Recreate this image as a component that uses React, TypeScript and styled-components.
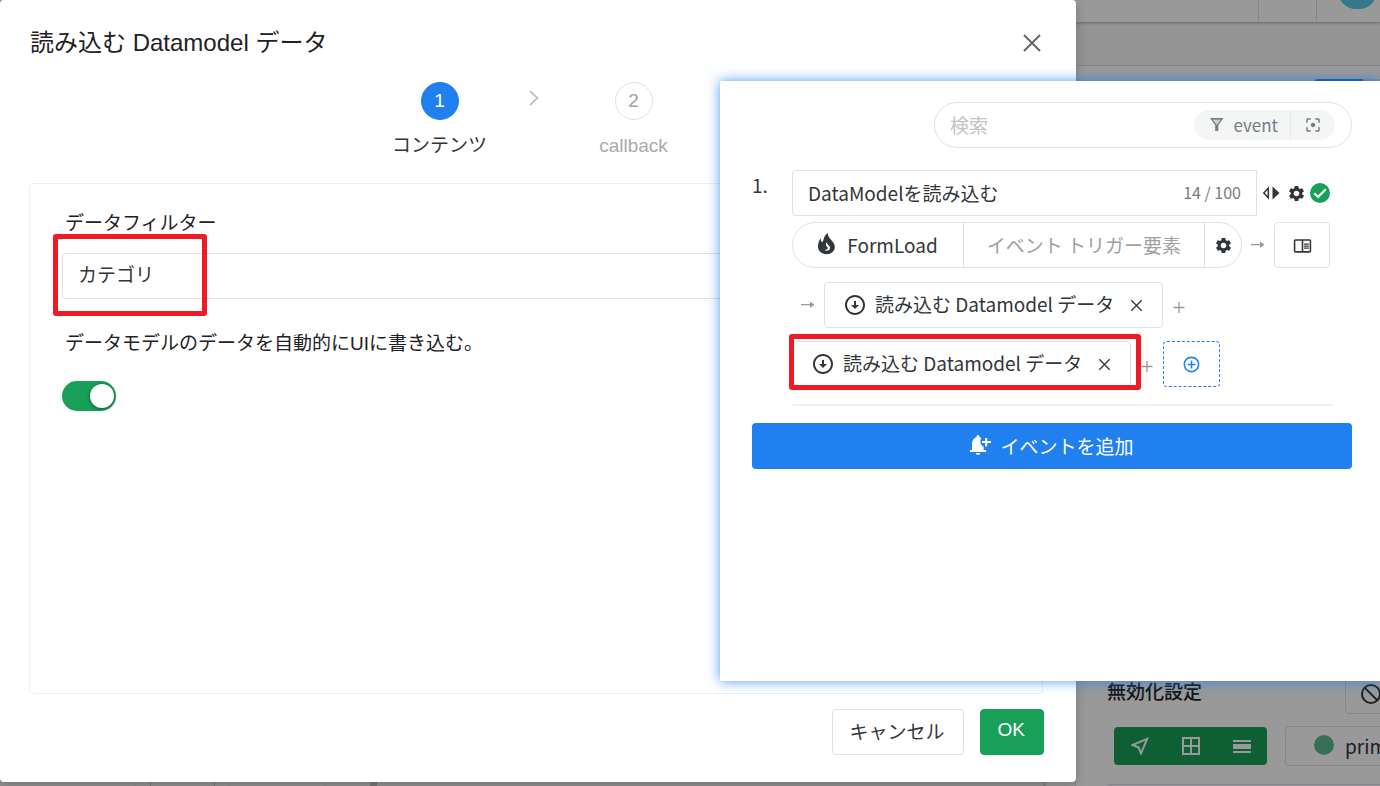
import React from "react";
import styled, { createGlobalStyle } from "styled-components";
import {
  MdControlPoint,
  MdFilterCenterFocus,
  MdOutlineArrowCircleDown,
  MdOutlineChromeReaderMode,
  MdOutlineNearMe,
  MdSettings,
} from "react-icons/md";

const sans = `"Liberation Sans", "Noto Sans CJK JP", sans-serif`;
const cjk = `"Noto Sans CJK JP", sans-serif`;
const blue = "#2080f0";
const green = "#18a058";
const line = "#e0e0e6";
const ink = "#333639";

const GlobalStyle = createGlobalStyle`
  *, *::before, *::after { box-sizing: border-box; }
  body { margin: 0; font-family: ${sans}; font-size: 19px; color: ${ink}; }
  button, input, select { font: inherit; color: inherit; margin: 0; }
  button { cursor: pointer; }
  svg { display: block; flex: none; }
`;

/* ---------- editor behind the dialog ---------- */

const Page = styled.div`
  position: relative;
  height: 100vh;
  overflow: hidden;
  background: #fff;
`;

const Editor = styled.div`
  height: 100%;
  display: flex;
  flex-direction: column;
`;

const TopBar = styled.header`
  position: relative;
  flex: none;
  height: 22px;
  display: flex;
  justify-content: flex-end;
  align-items: flex-end;
  box-shadow: 0 1px 3px rgba(0, 0, 0, 0.3);
`;

const TopCell = styled.div`
  width: 58px;
  height: 100%;
  border-left: 1px solid ${line};
`;

const AvatarCell = styled.div`
  height: 100%;
  padding: 0 3px 13px 21px;
  border-left: 1px solid ${line};
  display: flex;
  align-items: flex-end;
`;

const Avatar = styled.div`
  width: 39px;
  height: 36px;
  border-radius: 18px;
  background: #5ac8e4;
`;

const SubBar = styled.div`
  flex: none;
  height: 44px;
  background: #f7f7f8;
  border-bottom: 1px solid #dcdfdd;
`;

const Work = styled.div`
  flex: 1;
  min-height: 0;
  display: flex;
  background: #eee;
`;

const TreePane = styled.div`
  width: 370px;
  display: grid;
  grid-template-columns: 135px 16px 64px 15px 96px 1fr;
`;

const TreeColumn = styled.div<{ $strong?: boolean }>`
  border-right: 1px solid ${(p) => (p.$strong ? "#c0c0c2" : "#dedede")};
`;

const Splitter = styled.div`
  width: 7px;
  background: #c4c4c8;
`;

const Canvas = styled.div`
  flex: 1;
`;

const Gutter = styled.div`
  width: 32px;
  background: #f4f4f4;
  border-left: 3px solid #d8d8d8;
`;

const SidePane = styled.aside`
  width: 305px;
  padding-left: 31px;
  display: flex;
  flex-direction: column;
  justify-content: space-between;
  overflow: hidden;
  background: #fff;
  border-left: 1px solid ${line};
`;

const SideTabs = styled.div`
  display: flex;
  justify-content: flex-end;
  padding-top: 13px;
`;

const SideTab = styled.button<{ $active?: boolean }>`
  width: ${(p) => (p.$active ? 49 : 17)}px;
  height: 34px;
  border: 0;
  border-radius: ${(p) => (p.$active ? "4px 0 0 4px" : "0")};
  background: ${(p) => (p.$active ? blue : "#dbe8f8")};
`;

const SideSection = styled.section`
  font-family: ${cjk};
  padding-bottom: 1px;
`;

const SideHead = styled.div`
  display: flex;
  justify-content: space-between;
  align-items: center;
  height: 46px;
  margin-bottom: 12px;
`;

const SideTitle = styled.h3`
  margin: 0;
  font-size: 19px;
  font-weight: 500;
  line-height: 28px;
  color: #1f2225;
`;

const CutButton = styled.button`
  flex: none;
  width: 56px;
  height: 46px;
  margin-right: -21px;
  padding: 6px 14px 0;
  display: flex;
  align-items: center;
  background: none;
  border: 1px solid ${line};
  border-radius: 4px;
`;

const SideRow = styled.div`
  display: flex;
  align-items: center;
  gap: 18px;
  padding: 0 0 18px 7px;
  border-bottom: 1px solid ${line};
`;

const ModeGroup = styled.div`
  flex: none;
  width: 153px;
  height: 38px;
  display: flex;
  background: ${green};
  border-radius: 4px;
`;

const ModeButton = styled.button`
  flex: 1;
  padding: 0;
  display: flex;
  align-items: center;
  justify-content: center;
  background: none;
  border: 0;
  color: #fff;
`;

const TypeButton = styled.button`
  flex: none;
  height: 40px;
  padding: 0 28px 2px;
  display: flex;
  align-items: center;
  gap: 11px;
  background: none;
  border: 1px solid ${line};
  border-radius: 4px;
`;

const Dot = styled.span`
  width: 20px;
  height: 20px;
  border-radius: 50%;
  background: #5bbd92;
`;

const Mask = styled.div`
  position: absolute;
  inset: 0;
  background: rgba(0, 0, 0, 0.4);
`;

/* ---------- dialog ---------- */

const Dialog = styled.div`
  margin-right: 304px;
  height: calc(100% - 4px);
  padding: 25px 32px 27px 29px;
  display: flex;
  flex-direction: column;
  background: #fff;
  border-radius: 4px;
  box-shadow: 0 2px 12px rgba(0, 0, 0, 0.2);
`;

const DialogHead = styled.div`
  display: flex;
  justify-content: space-between;
  align-items: center;
  height: 36px;
`;

const DialogTitle = styled.h2`
  margin: 0;
  padding-left: 1px;
  font-size: 24px;
  font-weight: 400;
  line-height: 36px;
  color: #1f2225;
`;

const CloseButton = styled.button`
  padding: 2px;
  background: none;
  border: 0;
  color: #666;
`;

const Steps = styled.ol`
  list-style: none;
  margin: 21px 0 0;
  padding: 0;
  height: 101px;
  display: flex;
  justify-content: center;
`;

const Step = styled.li<{ $active?: boolean }>`
  width: 96px;
  display: flex;
  flex-direction: column;
  align-items: center;
  gap: 11px;
  line-height: 30px;
  white-space: nowrap;
  color: ${(p) => (p.$active ? ink : "#a8abb0")};
`;

const StepNumber = styled.span<{ $active?: boolean }>`
  width: 38px;
  height: 38px;
  border-radius: 50%;
  line-height: 36px;
  text-align: center;
  border: 1px solid ${(p) => (p.$active ? blue : line)};
  background: ${(p) => (p.$active ? blue : "#fff")};
  color: ${(p) => (p.$active ? "#fff" : "#a0a3a8")};
`;

const StepArrow = styled.li`
  width: 98px;
  padding: 7px 6px 0 0;
  display: flex;
  justify-content: center;
  color: #c2c2c2;
`;

const FormCard = styled.div`
  flex: 1;
  min-height: 0;
  margin-right: 1px;
  padding: 24px 32px;
  border: 1px solid #efeff1;
  border-radius: 4px;
`;

const FieldLabel = styled.label`
  display: block;
  padding: 1px 0 0 3px;
  line-height: 30px;
  color: #1f2225;
`;

const SelectWrap = styled.div`
  position: relative;
  margin: 14px 0 29px;
`;

const Select = styled.select`
  display: block;
  width: 100%;
  height: 46px;
  padding: 0 15px 2px;
  appearance: none;
  background: #fff;
  border: 1px solid ${line};
  border-radius: 4px;
`;

const SelectMark = styled.span`
  position: absolute;
  inset: -19px auto -17px -9px;
  width: 154px;
  border: 5px solid #ed1c24;
  border-radius: 3px;
  pointer-events: none;
`;

const Switch = styled.input`
  appearance: none;
  display: block;
  width: 54px;
  height: 30px;
  margin: 22px 0 0;
  padding: 3px 2px;
  border-radius: 15px;
  background: #c8c8c8;
  &::before {
    content: "";
    display: block;
    width: 24px;
    height: 24px;
    border-radius: 50%;
    background: #fff;
    box-shadow: 0 1px 4px rgba(0, 0, 0, 0.4);
  }
  &:checked { background: ${green}; }
  &:checked::before { margin-left: auto; }
`;

const DialogFoot = styled.div`
  padding-top: 15px;
  display: flex;
  justify-content: flex-end;
  gap: 16px;
`;

const FootButton = styled.button<{ $primary?: boolean }>`
  height: 46px;
  padding: 0 18px 4px 17px;
  border: 1px solid ${(p) => (p.$primary ? green : line)};
  border-radius: 4px;
  background: ${(p) => (p.$primary ? green : "#fff")};
  color: ${(p) => (p.$primary ? "#fff" : ink)};
`;

/* ---------- event drawer over the dialog ---------- */

const Drawer = styled.section`
  position: absolute;
  top: 81px;
  right: 0;
  width: 660px;
  height: 600px;
  padding: 21px 28px 21px 32px;
  background: #fff;
  box-shadow: 0 0 12px rgba(32, 128, 240, 0.8);
  font-family: ${cjk};
`;

const Search = styled.div`
  height: 46px;
  margin-left: 182px;
  padding: 0 16px 0 15px;
  display: flex;
  align-items: center;
  border: 1px solid ${line};
  border-radius: 23px;
`;

const TextInput = styled.input`
  flex: 1;
  min-width: 0;
  padding: 0 0 2px;
  border: 0;
  outline: 0;
  background: none;
  &::placeholder { color: #c2c2c2; opacity: 1; }
`;

const FilterPill = styled.div`
  height: 30px;
  display: flex;
  border-radius: 15px;
  background: #f3f6f5;
  color: #767c82;
  overflow: hidden;
`;

const FilterButton = styled.button`
  height: 30px;
  padding: 0 12px 0 13px;
  display: flex;
  align-items: center;
  gap: 8px;
  font-size: 17px;
  line-height: 30px;
  background: none;
  border: 0;
  & + & { border-left: 1px solid #e6eae9; padding-right: 13px; }
`;

const EventItem = styled.div`
  margin-top: 22px;
  display: flex;
`;

const EventIndex = styled.span`
  flex: none;
  width: 40px;
  line-height: 30px;
`;

const EventBody = styled.div`
  flex: 1;
  min-width: 0;
  margin-right: 19px;
  border-bottom: 2px solid #efeff5;
`;

const Row = styled.div<{ $gap?: number }>`
  display: flex;
  align-items: center;
  height: 46px;
  margin-top: ${(p) => p.$gap ?? 0}px;
`;

const LastRow = styled(Row)`
  margin-bottom: 17px;
`;

const NameBox = styled.div`
  flex: none;
  width: 465px;
  height: 46px;
  padding: 0 15px;
  display: flex;
  align-items: center;
  border: 1px solid ${line};
  border-radius: 4px 0 0 4px;
`;

const Counter = styled.span`
  padding-bottom: 2px;
  font-size: 16px;
  color: #767c82;
`;

const IconButton = styled.button`
  padding: 0;
  display: flex;
  background: none;
  border: 0;
`;

const RowTools = styled.div`
  display: flex;
  align-items: center;
  gap: 4px;
  padding-left: 5px;
`;

const Trigger = styled.div`
  flex: none;
  display: flex;
  width: 450px;
  height: 46px;
  border: 1px solid ${line};
  border-radius: 23px;
  overflow: hidden;
`;

const TriggerType = styled.button`
  flex: none;
  width: 170px;
  padding: 0 0 2px;
  display: flex;
  align-items: center;
  justify-content: center;
  gap: 12px;
  background: none;
  border: 0;
`;

const TriggerTarget = styled.button`
  flex: 1;
  padding: 0 0 2px;
  background: none;
  border: 0 solid ${line};
  border-width: 0 1px;
  color: #a0a0a0;
`;

const TriggerGear = styled.button`
  flex: none;
  width: 36px;
  padding: 0;
  display: flex;
  align-items: center;
  justify-content: center;
  background: none;
  border: 0;
`;

const Joint = styled.span`
  flex: none;
  width: 32px;
  display: flex;
  justify-content: center;
  color: #999;
`;

const PageButton = styled.button`
  width: 56px;
  height: 46px;
  padding: 0;
  display: flex;
  align-items: center;
  justify-content: center;
  background: none;
  border: 1px solid ${line};
  border-radius: 4px;
`;

const Chip = styled.div`
  position: relative;
  flex: none;
  width: 339px;
  height: 46px;
  padding: 0 19px 0 18px;
  display: flex;
  align-items: center;
  justify-content: space-between;
  border: 1px solid ${line};
  border-radius: 4px;
  white-space: nowrap;
`;

const ChipMark = styled.span`
  position: absolute;
  inset: -8px -11px -4px -4px;
  border: 5px solid #ed1c24;
  border-radius: 3px;
  pointer-events: none;
`;

const ChipLabel = styled.span`
  display: flex;
  align-items: center;
  gap: 8px;
`;

const ChipText = styled.span`
  padding-bottom: 3px;
`;

const AddStep = styled.button`
  width: 57px;
  height: 46px;
  padding: 0;
  display: flex;
  align-items: center;
  justify-content: center;
  background: none;
  border: 1px dashed ${blue};
  border-radius: 4px;
  color: ${blue};
`;

const AddEvent = styled.button`
  width: 100%;
  height: 46px;
  margin-top: 17px;
  padding: 0 0 2px;
  display: flex;
  align-items: center;
  justify-content: center;
  gap: 8px;
  background: ${blue};
  border: 0;
  border-radius: 4px;
  color: #fff;
`;

/* ---------- small drawings ---------- */

const Cross = ({ size, width }: { size: number; width: number }) => (
  <svg width={size} height={size} viewBox="0 0 20 20" fill="none" stroke="currentColor" strokeWidth={width}>
    <path d="M2 2 18 18M18 2 2 18" />
  </svg>
);

const ThinArrow = () => (
  <svg width="16" height="10" viewBox="0 0 16 10" fill="currentColor">
    <path d="M1 4h9V1.500L14.500 4.700 10 8V5.200H1z" />
  </svg>
);

const ThinPlus = () => (
  <svg width="12" height="16" viewBox="0 0 12 16" fill="none" stroke="currentColor" strokeWidth="1.3">
    <path d="M6 5v11M0.500 10.500h11" />
  </svg>
);

const Funnel = () => (
  <svg width="19" height="18" viewBox="0 0 19 18">
    <path d="M5 4h9l-4.500 5.600z" fill="#cdd0d2" />
    <path d="M3 2h13.500L11.300 9.300V15H8.200V9.300zM5.700 3.700 9.750 9l4.050-5.300z" fill="currentColor" fillRule="evenodd" />
  </svg>
);

const Triangles = () => (
  <svg width="21" height="16" viewBox="0 0 21 16">
    <path d="M6.300 3.200v9.600L1.800 8z" fill="none" stroke="currentColor" strokeWidth="1.500" />
    <path d="M10.500 1.500v13L17.500 8z" fill="currentColor" />
  </svg>
);

const Flame = () => (
  <svg width="17" height="22" viewBox="0 0 17 22">
    <path
      d="M9.800 0C9.900 3 11 4.500 13.200 7c2.200 2.500 3.600 4.200 3.600 7 0 4.200-3.600 7.200-8.300 7.200S0 18.200 0 13.600C0 10.300 1 7.500 2.800 5c-.1 1.900.3 3.300 1.400 4.200C5.600 8 5.500 5.500 6.600 3.500 7.400 2 8.600.8 9.800 0z"
      fill="currentColor"
    />
    <path
      d="M8.800 9.300c.2 1.500 1 2.300 2 3.200 1.300 1.200 1.600 2.400 1 3.600-1 2-3.800 2.300-5.600.6 1.700.2 3.100-.1 3.500-1.200.4-1.200-1.300-1.800-1.700-3.200-.3-1.100 0-2.100.8-3z"
      fill="#fff"
    />
  </svg>
);

const Tick = () => (
  <svg width="20" height="20" viewBox="0 0 20 20">
    <circle cx="10" cy="10" r="10" fill={green} />
    <path d="M4.300 10.300 8 14l7.800-7.800" fill="none" stroke="#fff" strokeWidth="2.200" />
  </svg>
);

const BellPlus = () => (
  <svg width="22" height="20" viewBox="0 0 22 20" fill="currentColor">
    <path d="M6.500 2.200C6.500.9 7 0 8 0s1.500.9 1.500 2.200c.7.2 1.300.5 1.800.9-.6 1-.9 2.100-.9 3.300 0 2.500 1.300 4.600 3.300 5.400V15H16v2H0v-2h2V8.300C2 5.200 3.800 2.900 6.500 2.200z" />
    <path d="M5.800 18h4.400c0 1.200-1 2-2.200 2s-2.200-.8-2.200-2z" />
    <path d="M15.200 3h2v3H21v2h-3.800v3.500h-2V8H12V6h3.200z" />
  </svg>
);

const ActionChip = ({ marked }: { marked?: boolean }) => (
  <Chip>
    <ChipLabel>
      <MdOutlineArrowCircleDown size={24} />
      <ChipText>読み込む Datamodel データ</ChipText>
    </ChipLabel>
    <IconButton aria-label="削除">
      <Cross size={13} width={2} />
    </IconButton>
    {marked && <ChipMark />}
  </Chip>
);

export default function App() {
  return (
    <Page>
      <GlobalStyle />
      <Editor>
        <TopBar>
          <TopCell />
          <AvatarCell>
            <Avatar />
          </AvatarCell>
        </TopBar>
        <SubBar />
        <Work>
          <TreePane>
            <TreeColumn />
            <TreeColumn $strong />
            <TreeColumn $strong />
            <TreeColumn />
            <TreeColumn />
          </TreePane>
          <Splitter />
          <Canvas />
          <Gutter />
          <SidePane>
            <SideTabs>
              <SideTab $active aria-label="設定" />
              <SideTab aria-label="スタイル" />
            </SideTabs>
            <SideSection>
              <SideHead>
                <SideTitle>無効化設定</SideTitle>
                <CutButton aria-label="無効化">
                  <svg width="22" height="22" viewBox="0 0 22 22" fill="none" stroke="currentColor" strokeWidth="2">
                    <circle cx="11" cy="11" r="9" />
                    <path d="M4.600 4.600 17.400 17.400" />
                  </svg>
                </CutButton>
              </SideHead>
              <SideRow>
                <ModeGroup>
                  <ModeButton aria-label="位置">
                    <MdOutlineNearMe size={24} />
                  </ModeButton>
                  <ModeButton aria-label="グリッド">
                    <svg width="20" height="20" viewBox="0 0 20 20" fill="none" stroke="currentColor" strokeWidth="2">
                      <path d="M2 2h16v16H2zM10 2v16M2 10h16" />
                    </svg>
                  </ModeButton>
                  <ModeButton aria-label="行">
                    <svg width="18" height="14" viewBox="0 0 18 14" fill="currentColor">
                      <path d="M0 1h18v2H0zM0 5h18v5H0zM0 12h18v2H0z" />
                    </svg>
                  </ModeButton>
                </ModeGroup>
                <TypeButton>
                  <Dot />
                  primary
                </TypeButton>
              </SideRow>
            </SideSection>
          </SidePane>
        </Work>
      </Editor>

      <Mask>
        <Dialog role="dialog" aria-labelledby="dialog-title">
          <DialogHead>
            <DialogTitle id="dialog-title">読み込む Datamodel データ</DialogTitle>
            <CloseButton aria-label="閉じる">
              <Cross size={20} width={2} />
            </CloseButton>
          </DialogHead>
          <Steps>
            <Step $active>
              <StepNumber $active>1</StepNumber>
              コンテンツ
            </Step>
            <StepArrow aria-hidden="true">
              <svg width="10" height="18" viewBox="0 0 10 18" fill="none" stroke="currentColor" strokeWidth="2">
                <path d="M1 2 8.500 9 1 16" />
              </svg>
            </StepArrow>
            <Step>
              <StepNumber>2</StepNumber>
              callback
            </Step>
          </Steps>
          <FormCard>
            <FieldLabel htmlFor="filter">データフィルター</FieldLabel>
            <SelectWrap>
              <Select id="filter">
                <option>カテゴリ</option>
              </Select>
              <SelectMark />
            </SelectWrap>
            <FieldLabel htmlFor="auto-write">データモデルのデータを自動的にUIに書き込む。</FieldLabel>
            <Switch id="auto-write" type="checkbox" defaultChecked />
          </FormCard>
          <DialogFoot>
            <FootButton>キャンセル</FootButton>
            <FootButton $primary>OK</FootButton>
          </DialogFoot>
        </Dialog>
      </Mask>

      <Drawer>
        <Search>
          <TextInput aria-label="検索" placeholder="検索" />
          <FilterPill>
            <FilterButton>
              <Funnel />
              event
            </FilterButton>
            <FilterButton aria-label="フォーカス">
              <MdFilterCenterFocus size={18} />
            </FilterButton>
          </FilterPill>
        </Search>

        <EventItem>
          <EventIndex>1.</EventIndex>
          <EventBody>
            <Row>
              <NameBox>
                <TextInput aria-label="イベント名" defaultValue="DataModelを読み込む" />
                <Counter>14 / 100</Counter>
              </NameBox>
              <RowTools>
                <IconButton aria-label="折りたたむ">
                  <Triangles />
                </IconButton>
                <IconButton aria-label="設定">
                  <MdSettings size={19} />
                </IconButton>
                <Tick />
              </RowTools>
            </Row>
            <Row $gap={6}>
              <Trigger>
                <TriggerType>
                  <Flame />
                  FormLoad
                </TriggerType>
                <TriggerTarget>イベント トリガー要素</TriggerTarget>
                <TriggerGear aria-label="トリガー設定">
                  <MdSettings size={19} />
                </TriggerGear>
              </Trigger>
              <Joint>
                <ThinArrow />
              </Joint>
              <PageButton aria-label="ページ">
                <MdOutlineChromeReaderMode size={19} />
              </PageButton>
            </Row>
            <Row $gap={14}>
              <Joint>
                <ThinArrow />
              </Joint>
              <ActionChip />
              <Joint>
                <ThinPlus />
              </Joint>
            </Row>
            <LastRow $gap={13}>
              <ActionChip marked />
              <Joint>
                <ThinPlus />
              </Joint>
              <AddStep aria-label="アクションを追加">
                <MdControlPoint size={19} />
              </AddStep>
            </LastRow>
          </EventBody>
        </EventItem>
        <AddEvent>
          <BellPlus />
          イベントを追加
        </AddEvent>
      </Drawer>
    </Page>
  );
}
